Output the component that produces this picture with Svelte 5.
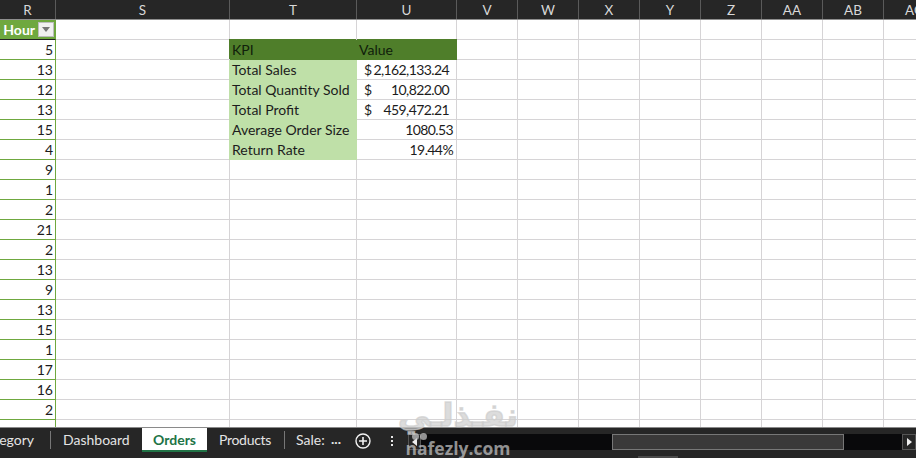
<script>
	const columns = ['R', 'S', 'T', 'U', 'V', 'W', 'X', 'Y', 'Z', 'AA', 'AB', 'AC'];
	const hours = ['5', '13', '12', '13', '15', '4', '9', '1', '2', '21', '2', '13', '9', '13', '15', '1', '17', '16', '2', ''];
	const kpis = [
		{ label: 'KPI', head: true, text: 'Value' },
		{ label: 'Total Sales', sign: '$', amount: '2,162,133.24' },
		{ label: 'Total Quantity Sold', sign: '$', amount: '10,822.00' },
		{ label: 'Total Profit', sign: '$', amount: '459,472.21' },
		{ label: 'Average Order Size', plain: '1080.53' },
		{ label: 'Return Rate', plain: '19.44%' }
	];
	const blanks = columns.slice(4);
</script>

<div class="sheet">
	<div class="row colhead">
		{#each columns as c}
			<div class="col">{c}</div>
		{/each}
	</div>

	<div class="row">
		<div class="cell hour-head">
			<span>Hour</span>
			<span class="filter"><i></i></span>
		</div>
		<div class="cell"></div>
		<div class="cell"></div>
		<div class="cell"></div>
		{#each blanks as b}<div class="cell"></div>{/each}
	</div>

	{#each hours as h, i}
		{@const k = kpis[i]}
		<div class="row">
			<div class="cell hour">{h}</div>
			<div class="cell"></div>
			{#if k}
				<div class="cell kpi" class:head={k.head}>{k.label}</div>
				{#if k.head}
					<div class="cell kpi head value">{k.text}</div>
				{:else if k.sign}
					<div class="cell money"><span>{k.sign}</span><span>{k.amount}</span></div>
				{:else}
					<div class="cell plain">{k.plain}</div>
				{/if}
			{:else}
				<div class="cell"></div>
				<div class="cell"></div>
			{/if}
			{#each blanks as b}<div class="cell"></div>{/each}
		</div>
	{/each}
</div>

<div class="tabbar">
	<div class="tabs">
		<div class="tab clipped">egory</div>
		<div class="tab dashboard">Dashboard</div>
		<div class="tab active">Orders</div>
		<div class="tab products">Products</div>
		<div class="tab sales">Sale:</div>
		<div class="more">...</div>
		<svg class="add" width="16" height="16" viewBox="0 0 16 16" aria-hidden="true">
			<circle cx="8" cy="8" r="7" fill="none" stroke="#f2f2f2" stroke-width="1.4" />
			<path d="M4 8h8M8 4v8" stroke="#f2f2f2" stroke-width="1.6" />
		</svg>
		<svg class="dots" width="4" height="10" viewBox="0 0 4 10" aria-hidden="true">
			<rect x="1" y="0" width="2" height="2" fill="#e8e8e8" />
			<rect x="1" y="4" width="2" height="2" fill="#e8e8e8" />
			<rect x="1" y="8" width="2" height="2" fill="#e8e8e8" />
		</svg>
		<div class="scroll">
			<div class="arrow left"><i></i></div>
			<div class="track">
				<div class="thumb"></div>
			</div>
			<div class="arrow right"><i></i></div>
		</div>
	</div>
	<div class="strip"><div class="strip-thumb"></div></div>
</div>

<div class="watermark">
	<div class="ar">نفـذلـي</div>
	<div class="pips"><i></i><i></i></div>
	<div class="en">nafezly.com</div>
</div>

<style>
	:global(body) {
		margin: 0;
		background: #fff;
		overflow: hidden;
	}
	.sheet {
		height: 427px;
		overflow: hidden;
		font-family: Lato, "Open Sans", sans-serif;
		font-size: 14px;
		color: #1c1c1c;
	}
	.row {
		display: grid;
		grid-template-columns: 56px 174px 127px 100px 61px 61px 61px 61px 61px 61px 61px 61px;
		height: 20px;
	}
	.colhead {
		background: #262626;
		border-bottom: 1px solid #8e8e8e;
		box-sizing: border-box;
	}
	.col {
		color: #d8d8d8;
		font-size: 13.5px;
		line-height: 20px;
		text-align: center;
		border-right: 1px solid #5a5a5a;
		overflow: hidden;
	}
	.cell {
		box-sizing: border-box;
		border-right: 1px solid #d6d4d6;
		border-bottom: 1px solid #d6d4d6;
		line-height: 20px;
		white-space: nowrap;
		overflow: hidden;
	}
	.hour-head {
		display: flex;
		align-items: center;
		justify-content: flex-end;
		gap: 3px;
		padding-right: 1px;
		background: #6fa83f;
		color: #fff;
		font-weight: 700;
		border-right: 1px solid #6fa83f;
		border-bottom: 1px solid #222;
	}
	.filter {
		width: 16px;
		height: 15px;
		background: #f1f1f1;
		border: 1px solid #bdbdbd;
		box-sizing: border-box;
		display: flex;
		align-items: center;
		justify-content: center;
	}
	.filter i {
		border-left: 4px solid transparent;
		border-right: 4px solid transparent;
		border-top: 5px solid #777;
	}
	.hour {
		text-align: right;
		padding-right: 2px;
		border-right: 1px solid #6fa83f;
		border-bottom: 1px solid #6fa83f;
	}
	.kpi {
		background: #bfe0a8;
		padding-left: 2px;
		border-right: 0;
		border-bottom: 0;
		box-shadow: -1px 0 0 #bfe0a8;
	}
	.kpi.head {
		background: #4f7e2a;
		color: #10200a;
		box-shadow: -1px -1px 0 #4f7e2a;
	}
	.kpi.value {
		box-shadow: 0 -1px 0 #4f7e2a;
	}
	.money {
		display: flex;
		justify-content: space-between;
		padding: 0 7px;
		letter-spacing: -0.6px;
	}
	.plain {
		text-align: right;
		padding-right: 3px;
		letter-spacing: -0.6px;
	}
	.tabbar {
		height: 31px;
		background: #262626;
		border-top: 1px solid #8a8a8a;
		box-sizing: border-box;
		font-family: Lato, "Open Sans", sans-serif;
		font-size: 14px;
		color: #e4e4e4;
	}
	.tabs {
		display: flex;
		align-items: center;
		height: 24px;
		overflow: hidden;
	}
	.tab {
		height: 24px;
		line-height: 24px;
		box-sizing: border-box;
		white-space: nowrap;
	}
	.clipped {
		margin-left: -13px;
		width: 64px;
		height: 18px;
		line-height: 18px;
		padding-right: 16px;
		text-align: right;
		border-right: 1px solid #777;
	}
	.dashboard {
		width: 91px;
		padding-left: 12px;
	}
	.active {
		width: 65px;
		text-align: center;
		background: #fff;
		color: #217346;
		font-weight: 700;
		border-bottom: 2px solid #217346;
	}
	.products {
		width: 77px;
		padding-left: 12px;
		letter-spacing: -0.3px;
	}
	.sales {
		width: 46px;
		height: 18px;
		line-height: 18px;
		padding-left: 11px;
		border-left: 1px solid #777;
		overflow: hidden;
	}
	.more {
		width: 12px;
		font-weight: 700;
		text-align: center;
		line-height: 14px;
		margin-top: -3px;
	}
	.add {
		margin-left: 13px;
		margin-top: 2px;
		flex: none;
	}
	.dots {
		margin-left: 19px;
		margin-top: 2px;
		flex: none;
	}
	.scroll {
		display: flex;
		align-items: stretch;
		height: 16px;
		margin-left: 14px;
		margin-top: 4px;
		flex: 1;
		min-width: 0;
	}
	.arrow {
		width: 13px;
		display: flex;
		align-items: center;
		justify-content: center;
		border: 1px solid #555;
		box-sizing: border-box;
		flex: none;
	}
	.arrow.right {
		width: 14px;
	}
	.arrow i {
		border-top: 4px solid transparent;
		border-bottom: 4px solid transparent;
	}
	.arrow.left i {
		border-right: 5px solid #eee;
	}
	.arrow.right i {
		border-left: 5px solid #eee;
	}
	.track {
		flex: 1;
		background: #09090b;
		padding: 0 58px 0 191px;
		box-sizing: border-box;
	}
	.thumb {
		height: 100%;
		box-sizing: border-box;
		background: #3a3939;
		border: 1px solid #777;
	}
	.strip {
		padding-left: 638px;
	}
	.strip-thumb {
		width: 40px;
		height: 2px;
		margin-top: 4px;
		background: #4a4a4a;
	}
	.watermark {
		position: absolute;
		left: 398px;
		top: 396px;
		width: 120px;
		text-align: center;
		color: rgba(205, 205, 205, 0.7);
		pointer-events: none;
	}
	.ar {
		font-family: "DejaVu Sans", sans-serif;
		font-weight: 700;
		font-size: 32px;
		line-height: 38px;
		white-space: nowrap;
		-webkit-text-stroke: 1.5px rgba(205, 205, 205, 0.7);
	}
	.pips {
		position: absolute;
		left: 14px;
		top: 37px;
		display: flex;
		gap: 1px;
	}
	.pips i {
		width: 7px;
		height: 7px;
		border-radius: 50%;
		background: rgba(205, 205, 205, 0.7);
	}
	.en {
		font-family: "Open Sans", sans-serif;
		font-weight: 700;
		font-size: 17.5px;
		line-height: 22px;
		margin-top: 3px;
	}
</style>
